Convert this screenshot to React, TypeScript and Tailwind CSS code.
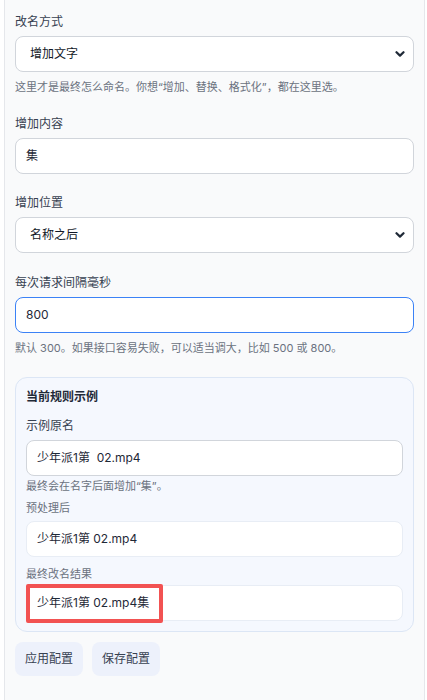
import React from 'react'

const font = "font-['Inter','Noto_Sans_CJK_SC',sans-serif]"

const Chevron = () => (
  <svg
    className="pointer-events-none absolute right-[9px] top-1/2 -translate-y-1/2"
    width="10"
    height="10"
    viewBox="0 0 10 10"
    fill="none"
  >
    <path d="M1.5 3.2 5 6.6 8.5 3.2" stroke="#1f2937" strokeWidth="2.2" strokeLinecap="round" strokeLinejoin="round" />
  </svg>
)

const Select = ({ value }: { value: string }) => (
  <div className="relative">
    <select
      defaultValue={value}
      className="block h-[36px] w-full appearance-none rounded-[8px] border border-[#d1d5db] bg-white pl-[14px] pr-8 text-[12px] text-[#111827] outline-none"
    >
      <option>{value}</option>
    </select>
    <Chevron />
  </div>
)

const Label = ({ children, className = '' }: { children: React.ReactNode; className?: string }) => (
  <div className={`text-[12px] leading-[18px] text-[#374151] ${className}`}>{children}</div>
)

const Hint = ({ children, className = '' }: { children: React.ReactNode; className?: string }) => (
  <div className={`text-[11px] leading-[16px] text-[#6b7280] ${className}`}>{children}</div>
)

const Field = ({ text, border = 'border-[#d1d5db]' }: { text: string; border?: string }) => (
  <div className={`flex h-[36px] items-center whitespace-pre rounded-[8px] border ${border} bg-white px-[10px] text-[12px] text-[#1f2937]`}>
    {text}
  </div>
)

export default function App() {
  return (
    <div className={`min-h-[700px] bg-white ${font}`}>
      <div className="ml-[4px] mr-[2px] min-h-[700px] border-x border-[#e5e7eb] bg-[#f9fafb] px-[10px] pt-[13px]">
        <Label>改名方式</Label>
        <div className="mt-[5px]">
          <Select value="增加文字" />
        </div>
        <Hint className="mt-[7px]">这里才是最终怎么命名。你想“增加、替换、格式化”，都在这里选。</Hint>

        <Label className="mt-[20px]">增加内容</Label>
        <div className="mt-[5px]">
          <Field text="集" />
        </div>

        <Label className="mt-[20px]">增加位置</Label>
        <div className="mt-[5px]">
          <Select value="名称之后" />
        </div>

        <Label className="mt-[21px]">每次请求间隔毫秒</Label>
        <div className="mt-[5px]">
          <Field text="800" border="border-[#3b82f6]" />
        </div>
        <Hint className="mt-[7px]">默认 300。如果接口容易失败，可以适当调大，比如 500 或 800。</Hint>

        <div className="mt-[21px] rounded-[12px] border border-[#dce6f5] bg-[#f5f8fe] px-[10px] pb-[10px] pt-[10px]">
          <div className="text-[12px] font-bold leading-[18px] text-[#1f2937]">当前规则示例</div>
          <Label className="mt-[11px]">示例原名</Label>
          <div className="mt-[5px]">
            <Field text="少年派1第  02.mp4" />
          </div>
          <Hint className="mt-[2px]">最终会在名字后面增加“集”。</Hint>
          <Hint className="mt-[6px]">预处理后</Hint>
          <div className="mt-[5px]">
            <Field text="少年派1第 02.mp4" border="border-[#e8edf5]" />
          </div>
          <Hint className="mt-[9px]">最终改名结果</Hint>
          <div className="relative mt-[3px]">
            <Field text="少年派1第 02.mp4集" border="border-[#e8edf5]" />
            <div className="absolute -top-[1px] left-0 h-[39px] w-[137px] rounded-[2px] border-[4px] border-[#f25252]" />
          </div>
        </div>

        <div className="mt-[10px] flex gap-[9px]">
          <button className="h-[34px] w-[68px] rounded-[8px] bg-[#edf1fb] text-[12px] text-[#374151]">应用配置</button>
          <button className="h-[34px] w-[68px] rounded-[8px] bg-[#edf1fb] text-[12px] text-[#374151]">保存配置</button>
        </div>
      </div>
    </div>
  )
}
